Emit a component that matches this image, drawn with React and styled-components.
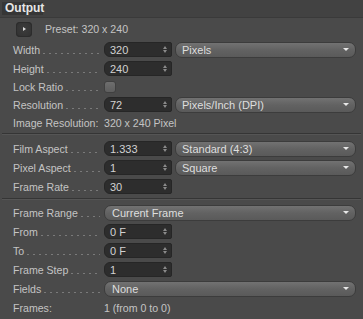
import React from "react";
import styled, { createGlobalStyle } from "styled-components";

const Global = createGlobalStyle`
  html, body { margin: 0; padding: 0; background: #4a4a4a; }
  body { font-family: "Liberation Sans", Arial, sans-serif; font-size: 10.6px; color: #c4c4c4; }
`;

const Panel = styled.div`
  width: 363px;
  height: 319px;
  background: #4a4a4a;
  display: flex;
  flex-direction: column;
  overflow: hidden;
`;

const Header = styled.div`
  height: 18px;
  background: #424242;
  border-bottom: 1px solid #3a3a3a;
  display: flex;
  align-items: center;
  padding-left: 2px;
  box-sizing: border-box;
`;

const Title = styled.div`
  background: #363636;
  color: #e6e6e6;
  font-weight: bold;
  font-size: 12px;
  height: 13px;
  line-height: 13px;
  padding: 0 3px;
  width: 35px;
`;

const PresetRow = styled.div`
  height: 22px;
  display: flex;
  align-items: center;
  padding-left: 16px;
  gap: 13px;
`;

const PresetButton = styled.div`
  width: 16px;
  height: 15px;
  border-radius: 4px;
  background: radial-gradient(circle at 50% 45%, #3c3c3c, #303030);
  box-shadow: inset 0 0 0 1px #2c2c2c;
  display: flex;
  align-items: center;
  justify-content: center;
  &::after {
    content: "";
    border-left: 3px solid #dcdcdc;
    border-top: 2.5px solid transparent;
    border-bottom: 2.5px solid transparent;
    margin-left: 1px;
  }
`;

const Row = styled.div`
  height: ${(p) => p.$h || 19}px;
  display: flex;
  align-items: center;
  padding-left: 13px;
  padding-right: 7px;
`;

const LabelCell = styled.div`
  width: 91px;
  flex: none;
  display: flex;
  align-items: center;
  white-space: nowrap;
`;

const Leader = styled.div`
  flex: 1;
  height: 8px;
  margin: 0 4px 0 2px;
  background-image: linear-gradient(to right, #7a7a7a 2px, transparent 2px);
  background-size: 6px 1px;
  background-repeat: repeat-x;
  background-position: 1px 7px;
`;

const Field = styled.div`
  width: 68px;
  height: 15px;
  flex: none;
  box-sizing: border-box;
  background: #2d2d2d;
  border: 1px solid #262626;
  border-radius: 6px 2px 2px 6px;
  display: flex;
  align-items: center;
  padding-left: 5px;
  color: #d2d2d2;
  font-size: 11px;
`;

const FieldValue = styled.span`
  flex: 1;
`;

const Spinner = styled.div`
  width: 8px;
  height: 13px;
  display: flex;
  flex-direction: column;
  align-items: center;
  justify-content: center;
  gap: 1px;
  margin-right: 2px;
  &::before, &::after {
    content: "";
    border-left: 2.5px solid transparent;
    border-right: 2.5px solid transparent;
  }
  &::before { border-bottom: 3px solid #8a8a8a; }
  &::after { border-top: 3px solid #8a8a8a; }
`;

const Select = styled.div`
  flex: 1;
  height: 16px;
  margin-left: ${(p) => (p.$full ? 0 : 3)}px;
  box-sizing: border-box;
  border-radius: 7px;
  background: linear-gradient(#727272, #626262 50%, #5a5a5a);
  border: 1px solid #3c3c3c;
  display: flex;
  align-items: center;
  padding: 0 6px 0 ${(p) => (p.$full ? 7 : 6)}px;
  color: #dedede;
  font-size: 11px;
  &::after {
    content: "";
    margin-left: auto;
    border-left: 3.5px solid transparent;
    border-right: 3.5px solid transparent;
    border-top: 3.5px solid #e8e8e8;
  }
`;

const Check = styled.div`
  width: 10px;
  height: 10px;
  border-radius: 3px;
  background: linear-gradient(#6e6e6e, #5e5e5e);
  border: 1px solid #404040;
`;

const Plain = styled.div`
  color: #c4c4c4;
  white-space: nowrap;
`;

const Separator = styled.div`
  height: ${(p) => p.$h}px;
  display: flex;
  flex-direction: column;
  padding-top: ${(p) => p.$top}px;
  box-sizing: border-box;
  &::before {
    content: "";
    height: 1px;
    margin: 0 2px;
    background: #353535;
  }
  &::after {
    content: "";
    height: 1px;
    margin: 0 2px;
    background: #555555;
  }
`;

const Label = ({ children }) => (
  <LabelCell>
    <span>{children}</span>
    <Leader />
  </LabelCell>
);

const NumField = ({ value }) => (
  <Field>
    <FieldValue>{value}</FieldValue>
    <Spinner />
  </Field>
);

export default function App() {
  return (
    <>
      <Global />
      <Panel>
        <Header>
          <Title>Output</Title>
        </Header>
        <PresetRow>
          <PresetButton />
          <Plain>Preset: 320 x 240</Plain>
        </PresetRow>
        <Row>
          <Label>Width</Label>
          <NumField value="320" />
          <Select>Pixels</Select>
        </Row>
        <Row>
          <Label>Height</Label>
          <NumField value="240" />
        </Row>
        <Row $h={17}>
          <Label>Lock Ratio</Label>
          <Check />
        </Row>
        <Row>
          <Label>Resolution</Label>
          <NumField value="72" />
          <Select>Pixels/Inch (DPI)</Select>
        </Row>
        <Row $h={17}>
          <LabelCell>
            <Plain>Image Resolution:</Plain>
          </LabelCell>
          <Plain>320 x 240 Pixel</Plain>
        </Row>
        <Separator $h={8} $top={2} />
        <Row>
          <Label>Film Aspect</Label>
          <NumField value="1.333" />
          <Select>Standard (4:3)</Select>
        </Row>
        <Row>
          <Label>Pixel Aspect</Label>
          <NumField value="1" />
          <Select>Square</Select>
        </Row>
        <Row>
          <Label>Frame Rate</Label>
          <NumField value="30" />
        </Row>
        <Separator $h={7} $top={2} />
        <Row>
          <Label>Frame Range</Label>
          <Select $full>Current Frame</Select>
        </Row>
        <Row>
          <Label>From</Label>
          <NumField value="0 F" />
        </Row>
        <Row>
          <Label>To</Label>
          <NumField value="0 F" />
        </Row>
        <Row>
          <Label>Frame Step</Label>
          <NumField value="1" />
        </Row>
        <Row>
          <Label>Fields</Label>
          <Select $full>None</Select>
        </Row>
        <Row>
          <LabelCell>
            <Plain>Frames:</Plain>
          </LabelCell>
          <Plain>1 (from 0 to 0)</Plain>
        </Row>
      </Panel>
    </>
  );
}
